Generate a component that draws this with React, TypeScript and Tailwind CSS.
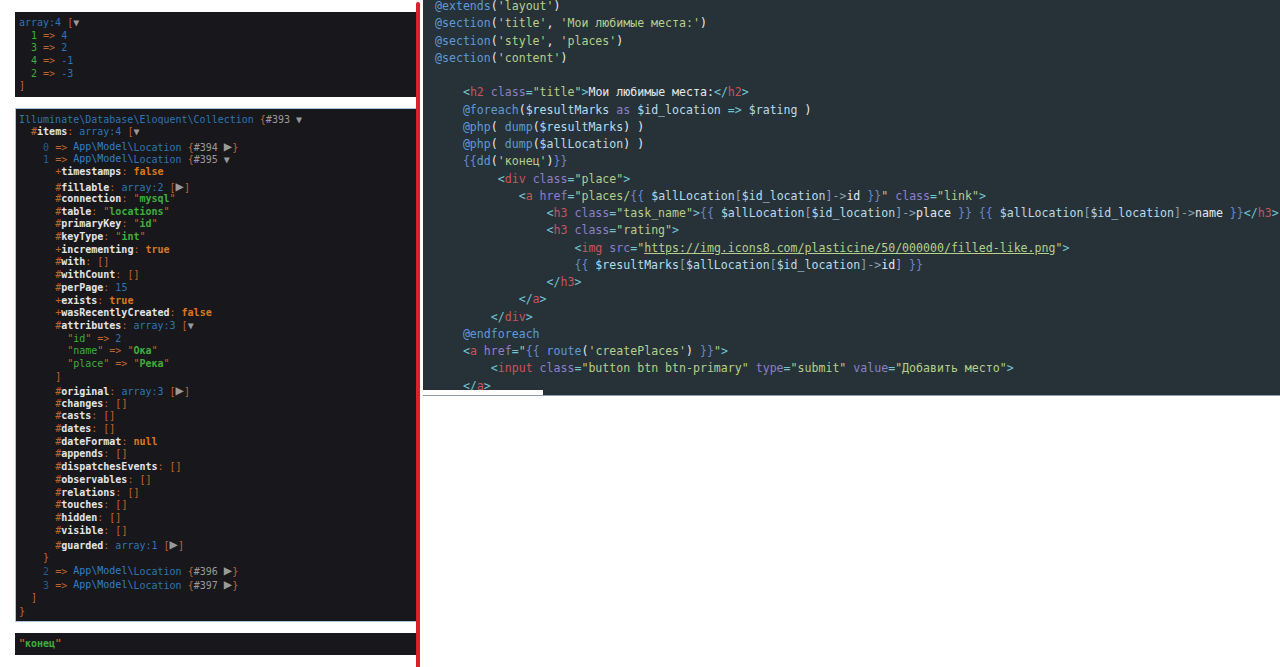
type Tok = [keyof typeof DUMP, string];
type DumpRow = { i: number; t: Tok[]; tall?: boolean };

const DUMP = {
  b: 'text-[#2c76b4]',
  l: 'text-[#2f80c8]',
  n: 'text-[#1f5f96]',
  o: 'text-[#c0652a]',
  f: 'text-[#d9791c] font-bold',
  g: 'text-[#3fae3a] font-bold',
  k: 'text-[#3fae3a]',
  w: 'text-[#e4e4e4] font-bold',
  a: 'text-[#9a9a9a]',
  t: 'text-[#9a9a9a] text-[14px]',
  r: 'text-[#9a9a9a]',
};

const CODE = {
  d: 'text-[#5f9ad8]',
  t: 'text-[#74c4d2]',
  h: 'text-[#c9545c]',
  c: 'text-[#8f7fc8]',
  s: 'text-[#b5d08a]',
  u: 'text-[#b5d08a] underline',
  v: 'text-[#b9dcec]',
  x: 'text-[#e6eaec]',
  p: 'text-[#8aa0b0]',
  m: 'text-[#6d86cf]',
};

function key(mark: string, name: string): Tok[] {
  return [['o', mark], ['w', name], ['o', ': ']];
}

function field(mark: string, name: string, rest: Tok[], tall?: boolean): DumpRow {
  return { i: 6, t: [...key(mark, name), ...rest], tall };
}

function empty(name: string): DumpRow {
  return field('#', name, [['o', '[]']]);
}

function model(index: string, num: string, open: boolean, tall: boolean): DumpRow {
  return {
    i: 4,
    tall,
    t: [
      ['n', index],
      ['o', ' => '],
      ['l', '@App\\Model\\'],
      ['b', 'Location'],
      ['o', ' {'],
      ['r', `#${num} `],
      ...(open ? ([['a', '▼']] as Tok[]) : ([['t', '▶'], ['o', '}']] as Tok[])),
    ],
  };
}

const MARKS: DumpRow[] = [
  { i: 0, t: [['b', 'array:4 '], ['o', '['], ['a', '▼']] },
  { i: 2, t: [['k', '1'], ['o', ' => '], ['b', '4']] },
  { i: 2, t: [['k', '3'], ['o', ' => '], ['b', '2']] },
  { i: 2, t: [['k', '4'], ['o', ' => '], ['b', '-1']] },
  { i: 2, t: [['k', '2'], ['o', ' => '], ['b', '-3']] },
  { i: 0, t: [['o', ']']] },
];

const COLLECTION: DumpRow[] = [
  { i: 0, t: [['b', 'Illuminate\\Database\\Eloquent\\Collection '], ['o', '{'], ['r', '#393 '], ['a', '▼']] },
  { i: 2, t: [...key('#', 'items'), ['b', 'array:4 '], ['o', '['], ['a', '▼']] },
  model('0', '394', false, true),
  model('1', '395', true, false),
  field('+', 'timestamps', [['f', 'false']]),
  field('#', 'fillable', [['b', 'array:2 '], ['o', '['], ['t', '▶'], ['o', ']']], true),
  field('#', 'connection', [['o', '"'], ['g', 'mysql'], ['o', '"']]),
  field('#', 'table', [['o', '"'], ['g', 'locations'], ['o', '"']]),
  field('#', 'primaryKey', [['o', '"'], ['g', 'id'], ['o', '"']]),
  field('#', 'keyType', [['o', '"'], ['g', 'int'], ['o', '"']]),
  field('+', 'incrementing', [['f', 'true']]),
  empty('with'),
  empty('withCount'),
  field('#', 'perPage', [['b', '15']]),
  field('+', 'exists', [['f', 'true']]),
  field('+', 'wasRecentlyCreated', [['f', 'false']]),
  field('#', 'attributes', [['b', 'array:3 '], ['o', '['], ['a', '▼']]),
  { i: 8, t: [['o', '"'], ['k', 'id'], ['o', '" => '], ['b', '2']] },
  { i: 8, t: [['o', '"'], ['k', 'name'], ['o', '" => "'], ['g', 'Ока'], ['o', '"']] },
  { i: 8, t: [['o', '"'], ['k', 'place'], ['o', '" => "'], ['g', 'Река'], ['o', '"']] },
  { i: 6, t: [['o', ']']] },
  field('#', 'original', [['b', 'array:3 '], ['o', '['], ['t', '▶'], ['o', ']']], true),
  empty('changes'),
  empty('casts'),
  empty('dates'),
  field('#', 'dateFormat', [['f', 'null']]),
  empty('appends'),
  empty('dispatchesEvents'),
  empty('observables'),
  empty('relations'),
  empty('touches'),
  empty('hidden'),
  empty('visible'),
  field('#', 'guarded', [['b', 'array:1 '], ['o', '['], ['t', '▶'], ['o', ']']], true),
  { i: 4, t: [['o', '}']] },
  model('2', '396', false, false),
  model('3', '397', false, true),
  { i: 2, t: [['o', ']']], tall: true },
  { i: 0, t: [['o', '}']] },
];

const SOURCE: [keyof typeof CODE, string][][] = [
  [['d', '@extends'], ['x', '('], ['s', "'layout'"], ['x', ')']],
  [['d', '@section'], ['x', '('], ['s', "'title'"], ['x', ', '], ['s', "'Мои любимые места:'"], ['x', ')']],
  [['d', '@section'], ['x', '('], ['s', "'style'"], ['x', ', '], ['s', "'places'"], ['x', ')']],
  [['d', '@section'], ['x', '('], ['s', "'content'"], ['x', ')']],
  [],
  [['x', '    '], ['t', '<'], ['h', 'h2'], ['c', ' class'], ['t', '='], ['s', '"title"'], ['t', '>'], ['x', 'Мои любимые места:'], ['t', '</'], ['h', 'h2'], ['t', '>']],
  [['x', '    '], ['d', '@foreach'], ['x', '('], ['v', '$resultMarks'], ['c', ' as '], ['v', '$id_location'], ['t', ' => '], ['v', '$rating'], ['x', ' )']],
  [['x', '    '], ['d', '@php'], ['x', '( '], ['d', 'dump'], ['x', '('], ['v', '$resultMarks'], ['x', ') )']],
  [['x', '    '], ['d', '@php'], ['x', '( '], ['d', 'dump'], ['x', '('], ['v', '$allLocation'], ['x', ') )']],
  [['x', '    '], ['m', '{{'], ['d', 'dd'], ['x', '('], ['s', "'конец'"], ['x', ')'], ['m', '}}']],
  [['x', '         '], ['t', '<'], ['h', 'div'], ['c', ' class'], ['t', '='], ['s', '"place"'], ['t', '>']],
  [['x', '            '], ['t', '<'], ['h', 'a'], ['c', ' href'], ['t', '='], ['s', '"places/'], ['m', '{{ '], ['v', '$allLocation'], ['p', '['], ['v', '$id_location'], ['p', ']->'], ['x', 'id'], ['m', ' }}'], ['s', '"'], ['c', ' class'], ['t', '='], ['s', '"link"'], ['t', '>']],
  [['x', '                '], ['t', '<'], ['h', 'h3'], ['c', ' class'], ['t', '='], ['s', '"task_name"'], ['t', '>'], ['m', '{{ '], ['v', '$allLocation'], ['p', '['], ['v', '$id_location'], ['p', ']->'], ['x', 'place'], ['m', ' }} {{ '], ['v', '$allLocation'], ['p', '['], ['v', '$id_location'], ['p', ']->'], ['x', 'name'], ['m', ' }}'], ['t', '</'], ['h', 'h3'], ['t', '>']],
  [['x', '                '], ['t', '<'], ['h', 'h3'], ['c', ' class'], ['t', '='], ['s', '"rating"'], ['t', '>']],
  [['x', '                    '], ['t', '<'], ['h', 'img'], ['c', ' src'], ['t', '='], ['s', '"'], ['u', 'https://img.icons8.com/plasticine/50/000000/filled-like.png'], ['s', '"'], ['t', '>']],
  [['x', '                    '], ['m', '{{ '], ['v', '$resultMarks'], ['p', '['], ['v', '$allLocation'], ['p', '['], ['v', '$id_location'], ['p', ']->'], ['x', 'id'], ['p', ']'], ['m', ' }}']],
  [['x', '                '], ['t', '</'], ['h', 'h3'], ['t', '>']],
  [['x', '            '], ['t', '</'], ['h', 'a'], ['t', '>']],
  [['x', '        '], ['t', '</'], ['h', 'div'], ['t', '>']],
  [['x', '    '], ['d', '@endforeach']],
  [['x', '    '], ['t', '<'], ['h', 'a'], ['c', ' href'], ['t', '='], ['s', '"'], ['m', '{{ '], ['d', 'route'], ['x', '('], ['s', "'createPlaces'"], ['x', ')'], ['m', ' }}'], ['s', '"'], ['t', '>']],
  [['x', '        '], ['t', '<'], ['h', 'input'], ['c', ' class'], ['t', '='], ['s', '"button btn btn-primary"'], ['c', ' type'], ['t', '='], ['s', '"submit"'], ['c', ' value'], ['t', '='], ['s', '"Добавить место"'], ['t', '>']],
  [['x', '    '], ['t', '</'], ['h', 'a'], ['t', '>']],
];

function DumpLine({ row }: { row: DumpRow }) {
  return (
    <div className={row.tall ? 'h-[14.4px] leading-[14.4px] whitespace-pre' : 'h-[12.7px] leading-[12.7px] whitespace-pre'}>
      {' '.repeat(row.i)}
      {row.t.map(([c, text], n) =>
        text.startsWith('@') ? (
          <span key={n} className={`${DUMP[c]} align-[1px]`}>{text.slice(1)}</span>
        ) : (
          <span key={n} className={DUMP[c]}>{text}</span>
        ),
      )}
    </div>
  );
}

function DumpPanel({ rows, className }: { rows: DumpRow[]; className: string }) {
  return <div className={`bg-[#18171b] ${className}`}>{rows.map((row, n) => <DumpLine key={n} row={row} />)}</div>;
}

export default function App() {
  return (
    <div className="relative flex h-[667px] w-[1280px] overflow-hidden bg-white">
      {/* browser output */}
      <div className="flex w-[416px] flex-col pl-[15px] pt-[12px] font-['DejaVu_Sans_Mono',monospace] text-[10px]">
        <DumpPanel rows={MARKS} className="h-[85px] pl-[4px] pt-[5px]" />
        <DumpPanel rows={COLLECTION} className="mt-[11px] h-[514px] border-l border-t border-b border-[#a9c4e4] pl-[3px] pt-[4.5px]" />
        <div className="mt-[11px] h-[22px] bg-[#18171b] pl-[4px] leading-[22px] font-bold">
          <span className="text-[#c0652a]">"</span>
          <span className="text-[#3fae3a]">конец</span>
          <span className="text-[#c0652a]">"</span>
        </div>
      </div>

      {/* red divider */}
      <div className="mt-[2px] w-[4px] rounded-t-sm bg-[#dc1f2e]" />

      {/* editor */}
      <div className="relative ml-[3px] h-[396px] flex-1 overflow-hidden border-b border-[#8c9ca8] bg-[#263238] pl-[12px] font-['DejaVu_Sans_Mono',monospace] text-[11.58px]">
        <div className="-mt-[2px]">
          {SOURCE.map((line, n) => (
            <div key={n} className="h-[17.25px] leading-[17.25px] whitespace-pre">
              {line.map(([c, text], k) => (
                <span key={k} className={CODE[c]}>{text}</span>
              ))}
            </div>
          ))}
        </div>
        <div className="absolute -bottom-px left-0 h-[6px] w-[120px] bg-white" />
      </div>
    </div>
  );
}
